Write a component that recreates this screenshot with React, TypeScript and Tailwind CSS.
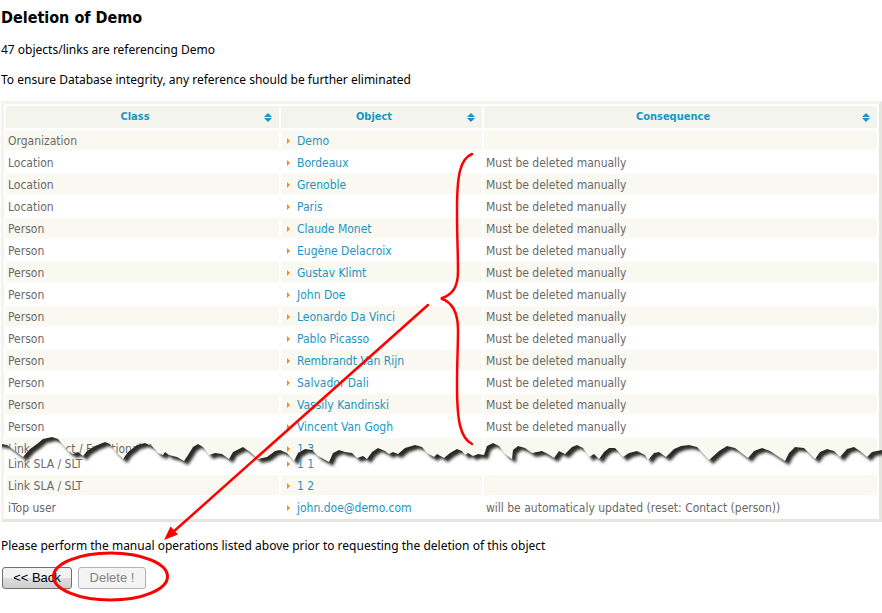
interface Reference {
  type: string;
  object: string;
  consequence?: string;
  torn?: boolean;
}

const MANUAL = "Must be deleted manually";

const references: Reference[] = [
  { type: "Organization", object: "Demo" },
  { type: "Location", object: "Bordeaux", consequence: MANUAL },
  { type: "Location", object: "Grenoble", consequence: MANUAL },
  { type: "Location", object: "Paris", consequence: MANUAL },
  { type: "Person", object: "Claude Monet", consequence: MANUAL },
  { type: "Person", object: "Eugène Delacroix", consequence: MANUAL },
  { type: "Person", object: "Gustav Klimt", consequence: MANUAL },
  { type: "Person", object: "John Doe", consequence: MANUAL },
  { type: "Person", object: "Leonardo Da Vinci", consequence: MANUAL },
  { type: "Person", object: "Pablo Picasso", consequence: MANUAL },
  { type: "Person", object: "Rembrandt Van Rijn", consequence: MANUAL },
  { type: "Person", object: "Salvador Dali", consequence: MANUAL },
  { type: "Person", object: "Vassily Kandinski", consequence: MANUAL },
  { type: "Person", object: "Vincent Van Gogh", consequence: MANUAL },
  { type: "Link Contact / FunctionalCI", object: "1 3", torn: true },
  { type: "Link SLA / SLT", object: "1 1" },
  { type: "Link SLA / SLT", object: "1 2" },
  {
    type: "iTop user",
    object: "john.doe@demo.com",
    consequence: "will be automaticaly updated (reset: Contact (person))",
  },
];

// Upper edge of the torn strip, left to right
const TEAR =
  "2,444 7,445 15,451 23,457 30,449 37,444 43,439 52,437 58,439 63,445 68,451 73,454 78,452 83,456 87,451 95,446 105,442 110,444 115,451 123,459 128,452 137,445 145,443 152,446 158,453 163,455 165,452 169,455 177,457 184,461 188,455 193,447 198,444 203,447 209,455 215,453 222,454 229,459 233,452 243,447 250,452 258,459 267,457 275,451 280,450 287,453 294,461 298,453 305,449 312,450 318,456 329,462 333,453 339,450 345,452 352,453 357,458 363,456 367,459 372,452 378,448 385,451 389,454 393,452 398,454 405,448 415,445 422,447 427,453 434,457 437,454 444,458 450,453 457,449 462,451 465,455 468,453 473,456 478,454 484,455 487,446 493,443 499,446 505,454 512,459 513,450 518,446 525,448 532,453 542,451 548,454 554,458 559,451 565,454 572,447 577,445 583,448 589,457 594,454 599,459 604,452 609,448 615,448 623,457 629,453 637,451 645,455 648,460 654,453 659,452 666,457 674,449 681,446 689,445 697,447 709,460 719,451 727,446 735,448 748,458 754,451 762,448 770,451 785,461 789,453 795,447 804,448 815,459 820,452 827,449 834,451 840,457 847,449 854,447 860,451 867,457 872,452 882,450";

function SortIcon() {
  return (
    <svg className="h-[9px] w-2 shrink-0" viewBox="0 0 8 9" fill="#1c94c4" aria-hidden="true">
      <path d="M4 0 8 4H0z M0 5h8L4 9z" />
    </svg>
  );
}

function Bullet() {
  return (
    <svg className="mr-[7px] h-[6px] w-[3px] shrink-0" viewBox="0 0 3 6" fill="#f0900a" aria-hidden="true">
      <path d="M0 0 3 3 0 6z" />
    </svg>
  );
}

function HeaderCell({ label }: { label: string }) {
  return (
    <th scope="col" className="bg-[#f4f4ee] p-0 text-[11px] font-bold text-[#1c94c4]">
      <div className="flex h-[22px] items-center pr-[7px]">
        <span className="flex-1 text-center">{label}</span>
        <SortIcon />
      </div>
    </th>
  );
}

function Row({ item, striped }: { item: Reference; striped: boolean }) {
  const cell = striped ? "bg-[#f9f8f1] p-0" : "p-0";
  const line = item.torn ? "h-[13px] whitespace-nowrap" : "h-[20px] whitespace-nowrap";
  // the torn row runs on under the tear
  const fill = item.torn
    ? "flex h-[24px] bg-[#f9f8f1] leading-[22px]"
    : "relative z-20 flex h-[20px] leading-[22px]";

  return (
    <tr>
      <td className={cell}>
        <div className={line}>
          <span className={`${fill} pl-[2px]`}>{item.type}</span>
        </div>
      </td>
      <td className={cell}>
        <div className={line}>
          <span className={`${fill} pl-[6px]`}>
            <a href="#" className="inline-flex h-[22px] items-center text-[#1c94c4]">
              <Bullet />
              {item.object}
            </a>
          </span>
        </div>
      </td>
      <td className={cell}>
        <div className={line}>
          <span className={`${fill} pl-[2px]`}>{item.consequence}</span>
        </div>
      </td>
    </tr>
  );
}

function Tear() {
  return (
    <svg
      className="pointer-events-none absolute top-0 left-0 z-10 h-[603px] w-[882px]"
      viewBox="0 0 882 603"
      aria-hidden="true"
    >
      <defs>
        <clipPath id="strip">
          <polygon points={`${TEAR} 882,474 2,474`} />
        </clipPath>
        <filter id="soft" x="-5%" y="-20%" width="110%" height="140%">
          <feGaussianBlur stdDeviation="1.8" />
        </filter>
      </defs>
      <g clipPath="url(#strip)">
        <rect x="4" y="430" width="875" height="45" fill="#fff" />
        <polygon
          points={`-20,420 -20,440 ${TEAR} 900,450 900,420`}
          transform="translate(4 4)"
          fill="#2c2c28"
          filter="url(#soft)"
        />
      </g>
    </svg>
  );
}

function Annotations() {
  return (
    <svg
      className="pointer-events-none absolute top-0 left-0 z-30 h-[603px] w-[882px]"
      viewBox="0 0 882 603"
      fill="none"
      stroke="#f00"
      aria-hidden="true"
    >
      <path
        strokeWidth="2.5"
        strokeLinecap="round"
        strokeLinejoin="bevel"
        d="M472 154C460 159 457 175 457 210C457 240 458 250 458 271C458 288 452 295 441 298.500C452 302 458 312 458 330C458 350 457 360 457 385C457 420 460 438 472 444"
      />
      <path strokeWidth="2.5" strokeLinecap="round" d="M428 305 172 533" />
      <path d="M164 540 170.500 526.500 178 534.500z" fill="#f00" stroke="none" />
      <ellipse cx="110.500" cy="576.500" rx="57" ry="23.500" strokeWidth="3" />
    </svg>
  );
}

export default function App() {
  return (
    <div className="relative bg-white pt-[8px] pb-[24px] pl-px font-['DejaVu_Sans_Condensed','DejaVu_Sans',sans-serif] text-[12px] leading-[20px] text-black">
      <h1 className="text-[16px] leading-[20px] font-bold">Deletion of Demo</h1>
      <p className="mt-[12px] font-['Noto_Sans',sans-serif]">47 objects/links are referencing Demo</p>
      <p className="mt-[10px] font-['Noto_Sans',sans-serif]">
        To ensure Database integrity, any reference should be further eliminated
      </p>

      <table className="mt-[11px] w-full table-fixed border-separate border-spacing-[2px] border-[3px] border-t-[#f4f4ee] border-r-[#e6e6e0] border-b-[#e6e6e0] border-l-[#f4f4ee] text-[#696969]">
        <colgroup>
          <col className="w-[273px]" />
          <col className="w-[201px]" />
          <col />
        </colgroup>
        <thead>
          <tr>
            <HeaderCell label="Class" />
            <HeaderCell label="Object" />
            <HeaderCell label="Consequence" />
          </tr>
        </thead>
        <tbody>
          {references.map((item, index) => (
            <Row key={index} item={item} striped={index % 2 === 0} />
          ))}
        </tbody>
      </table>

      <p className="mt-[14px] font-['Noto_Sans',sans-serif]">
        Please perform the manual operations listed above prior to requesting the deletion of this object
      </p>

      <div className="mt-[11px] flex gap-[6px] pl-px font-['Liberation_Sans',Arial,sans-serif] text-[13px]">
        <button
          type="button"
          className="h-[22px] w-[70px] rounded-[3px] border border-[#707070] bg-linear-to-b from-[#f2f2f2] from-50% via-[#dddddd] via-50% to-[#cfcfcf] leading-[20px] text-black"
        >
          &lt;&lt; Back
        </button>
        <button
          type="button"
          disabled
          className="h-[22px] w-[68px] rounded-[3px] border border-[#adb2b5] bg-[#f4f4f4] leading-[20px] text-[#838383]"
        >
          Delete !
        </button>
      </div>

      <Tear />
      <Annotations />
    </div>
  );
}
